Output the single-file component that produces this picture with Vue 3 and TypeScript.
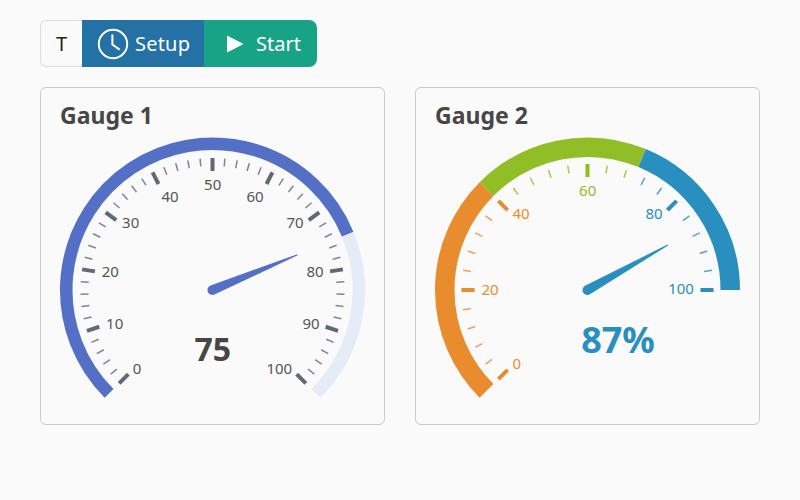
<script setup lang="ts">
const ORANGE = '#e98c2e'
const GREEN = '#8fbe26'
const BLUE = '#288fbf'

interface Tick { x1: number; y1: number; x2: number; y2: number; w: number; color: string; op: number }
interface Seg { d: string; color: string }
interface Label { x: number; y: number; t: string; color: string }

const pt = (cx: number, r: number, deg: number): [number, number] => {
  const a = (deg * Math.PI) / 180
  return [cx + r * Math.cos(a), 290 - r * Math.sin(a)]
}
const arc = (cx: number, r: number, from: number, to: number): string => {
  const [x1, y1] = pt(cx, r, from)
  const [x2, y2] = pt(cx, r, to)
  return `M${x1} ${y1}A${r} ${r} 0 ${from - to > 180 ? 1 : 0} 1 ${x2} ${y2}`
}
const needle = (cx: number, deg: number): string => {
  const n = (w: number, l: number): string => {
    const a = (deg * Math.PI) / 180
    const x = cx + l * Math.cos(a) + w * Math.sin(a)
    const y = 290 - l * Math.sin(a) + w * Math.cos(a)
    return `${x} ${y}`
  }
  return `M${n(5, 0)}L${n(0.5, 92)}L${n(-0.5, 92)}L${n(-5, 0)}A5 5 0 0 0 ${n(5, 0)}Z`
}

const ticks1: Tick[] = []
for (let i = 0; i <= 50; i++) {
  const deg = 225 - i * 5.4
  const major = i % 5 === 0
  const [x1, y1] = pt(212.5, 132, deg)
  const [x2, y2] = pt(212.5, major ? 119 : 124, deg)
  ticks1.push({ x1, y1, x2, y2, w: major ? 4 : 1.5, color: '#63677a', op: major ? 1 : 0.8 })
}
const ticks2: Tick[] = []
for (let i = 0; i <= 25; i++) {
  const v = i * 4
  const deg = 225 - v * 2.25
  const major = i % 5 === 0
  const color = v <= 40 ? ORANGE : v <= 70 ? GREEN : BLUE
  const [x1, y1] = pt(587.5, 126, deg)
  const [x2, y2] = pt(587.5, major ? 113 : 118, deg)
  ticks2.push({ x1, y1, x2, y2, w: major ? 4 : 1.5, color, op: major ? 1 : 0.8 })
}

const r1 = 146.25
const r2 = 142.75
const segs1: Seg[] = [
  { d: arc(212.5, r1, 22.5, -45), color: '#e6ebf8' },
  { d: arc(212.5, r1, 225, 22.5), color: '#5470c6' },
]
const segs2: Seg[] = [
  { d: arc(587.5, r2, 225, 135), color: ORANGE },
  { d: arc(587.5, r2, 135, 67.5), color: GREEN },
  { d: arc(587.5, r2, 67.5, 0), color: BLUE },
]

const labelColor = '#555'
const labels1: Label[] = [
  [137, 368, '0'], [114.7, 323.4, '10'], [110.3, 271.4, '20'], [130.7, 222.4, '30'],
  [170, 196.4, '40'], [212.7, 184, '50'], [255, 196.4, '60'], [295, 222.4, '70'],
  [315, 271.4, '80'], [311, 323.4, '90'], [279.3, 368, '100'],
].map(([x, y, t]) => ({ x: x as number, y: y as number, t: t as string, color: labelColor }))
const labels2: Label[] = [
  { x: 516.7, y: 363, t: '0', color: ORANGE },
  { x: 490, y: 288.7, t: '20', color: ORANGE },
  { x: 521, y: 213, t: '40', color: ORANGE },
  { x: 587.7, y: 190.4, t: '60', color: GREEN },
  { x: 654, y: 213, t: '80', color: BLUE },
  { x: 681, y: 288.4, t: '100', color: BLUE },
]

const gauges = [
  {
    title: 'Gauge 1', box: '41 132 343 292', segs: segs1, width: 12.5, ticks: ticks1, labels: labels1,
    needle: needle(212.5, 22.5), needleColor: '#5470c6',
    value: '75', vx: 212.7, vy: 348, vsize: 32, vcolor: '#464646',
  },
  {
    title: 'Gauge 2', box: '416 132 343 292', segs: segs2, width: 19.5, ticks: ticks2, labels: labels2,
    needle: needle(587.5, 29.25), needleColor: BLUE,
    value: '87%', vx: 618, vy: 339.5, vsize: 36, vcolor: BLUE,
  },
]
</script>

<template>
  <div class="page">
    <div class="toolbar">
      <button class="btn btn-t">T</button>
      <button class="btn btn-setup">
        <svg class="clock" width="32" height="32" viewBox="0 0 32 32" fill="none" stroke="#fff">
          <circle cx="16" cy="16" r="14.2" stroke-width="2" />
          <path d="M15.4 6.6V16.6L22.6 21.6" stroke-width="2" />
        </svg>
        <span>Setup</span>
      </button>
      <button class="btn btn-start">
        <svg class="play" width="17" height="18" viewBox="0 0 17 18"><path d="M0 0.5L16.5 9L0 17.5Z" fill="#fff" /></svg>
        <span>Start</span>
      </button>
    </div>
    <div class="cards">
      <div v-for="g in gauges" :key="g.title" class="card">
        <h2 class="title">{{ g.title }}</h2>
        <svg class="chart" width="343" height="292" :viewBox="g.box">
          <path v-for="(s, i) in g.segs" :key="i" :d="s.d" fill="none" :stroke="s.color" :stroke-width="g.width" />
          <line
            v-for="(t, i) in g.ticks" :key="i"
            :x1="t.x1" :y1="t.y1" :x2="t.x2" :y2="t.y2"
            :stroke="t.color" :stroke-width="t.w" :stroke-opacity="t.op"
          />
          <text
            v-for="l in g.labels" :key="l.t"
            class="label" :x="l.x" :y="l.y" :fill="l.color"
          >{{ l.t }}</text>
          <path :d="g.needle" :fill="g.needleColor" />
          <text
            class="value" :x="g.vx" :y="g.vy" :fill="g.vcolor" :font-size="g.vsize"
          >{{ g.value }}</text>
        </svg>
      </div>
    </div>
  </div>
</template>

<style>
html, body { margin: 0; background: #fafafa; }
</style>

<style scoped>
.page {
  width: 800px;
  height: 500px;
  box-sizing: border-box;
  padding: 20px 40px;
  background: #fafafa;
  font-family: "Noto Sans", "Open Sans", sans-serif;
}
.toolbar {
  display: inline-flex;
  height: 47px;
  vertical-align: top;
}
.btn {
  display: flex;
  align-items: center;
  box-sizing: border-box;
  height: 47px;
  margin: 0;
  padding: 0;
  border: 0;
  font-family: inherit;
  font-size: 20px;
  color: #fff;
}
.btn-t {
  width: 42px;
  justify-content: center;
  color: #222;
  background: #fafafa;
  border: 1px solid #ddd;
  border-right: 0;
  border-radius: 6px 0 0 6px;
}
.btn-setup {
  width: 122px;
  padding-left: 15px;
  gap: 6px;
  background: #2371a5;
}
.btn-setup span { letter-spacing: 0.2px; }
.btn-start {
  width: 113px;
  padding-left: 23px;
  gap: 12px;
  background: #19a386;
  border-radius: 0 8px 8px 0;
}
.cards {
  display: grid;
  grid-template-columns: 345px 345px;
  gap: 30px;
  margin-top: 20px;
}
.card {
  box-sizing: border-box;
  height: 338px;
  border: 1px solid #ccc;
  border-radius: 6px;
  background: #fafafa;
}
.title {
  margin: 0;
  height: 44px;
  padding: 11px 0 0 19px;
  box-sizing: border-box;
  font-size: 23px;
  line-height: 32px;
  font-weight: 700;
  color: #464646;
}
.chart {
  display: block;
}
.label {
  font-size: 15px;
  text-anchor: middle;
  dominant-baseline: central;
}
.value {
  font-weight: 700;
  text-anchor: middle;
  dominant-baseline: central;
}
</style>
